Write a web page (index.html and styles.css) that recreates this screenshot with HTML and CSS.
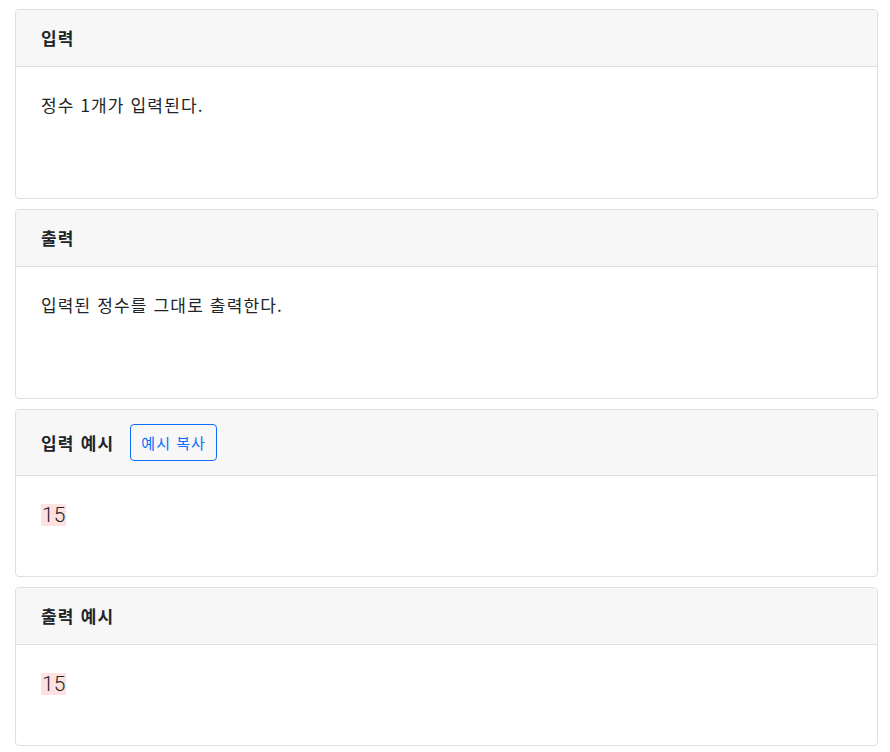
FILE: index.html
```html
<!DOCTYPE html>
<html lang="ko">
<head>
<meta charset="utf-8">
<link rel="stylesheet" href="styles.css">
</head>
<body>
<div class="page">
  <section class="card">
    <div class="card-header"><h3 class="title">입력</h3></div>
    <div class="card-body tall"><p class="text">정수 1개가 입력된다.</p></div>
  </section>
  <section class="card">
    <div class="card-header"><h3 class="title">출력</h3></div>
    <div class="card-body tall"><p class="text">입력된 정수를 그대로 출력한다.</p></div>
  </section>
  <section class="card">
    <div class="card-header"><h3 class="title">입력 예시</h3><button class="copy-btn" type="button">예시 복사</button></div>
    <div class="card-body short"><code class="sample">15</code></div>
  </section>
  <section class="card">
    <div class="card-header"><h3 class="title">출력 예시</h3></div>
    <div class="card-body short"><code class="sample">15</code></div>
  </section>
</div>
</body>
</html>
```
FILE: styles.css
```css
html, body {
  margin: 0;
  padding: 0;
  background: #ffffff;
}
body {
  font-family: "Noto Sans CJK KR", "Noto Sans", sans-serif;
  color: #212529;
}
.page {
  padding: 9px 12px 0 15px;
  display: flex;
  flex-direction: column;
  gap: 10px;
}
.card {
  border: 1px solid #dfdfdf;
  border-radius: 4px;
  background: #fff;
  overflow: hidden;
}
.card-header {
  box-sizing: border-box;
  min-height: 57px;
  padding: 14px 25px;
  display: flex;
  align-items: center;
  gap: 16px;
  background: #f7f7f7;
  border-bottom: 1px solid #dfdfdf;
}
.title {
  margin: 0;
  font-size: 17px;
  font-weight: 700;
  line-height: 24px;
  letter-spacing: 1.2px;
}
.copy-btn {
  height: 37px;
  padding: 0 10px;
  border: 1px solid #0d6efd;
  border-radius: 4px;
  background: transparent;
  color: #0d6efd;
  font-family: "Noto Sans CJK KR", sans-serif;
  font-size: 15px;
  letter-spacing: 1px;
}
.card-body {
  box-sizing: border-box;
  padding: 25px 25px;
}
.card-body.tall { min-height: 131px; }
.card-body.short { min-height: 100px; }
.text {
  margin: 0;
  font-size: 17px;
  line-height: 26px;
  letter-spacing: 1.15px;
}
.sample {
  display: inline-block;
  font-family: Roboto, sans-serif;
  font-weight: 300;
  font-size: 21px;
  line-height: 22px;
  margin-top: 3px;
  padding: 0 1px;
  background: #fde2e1;
  color: #222;
}
```
